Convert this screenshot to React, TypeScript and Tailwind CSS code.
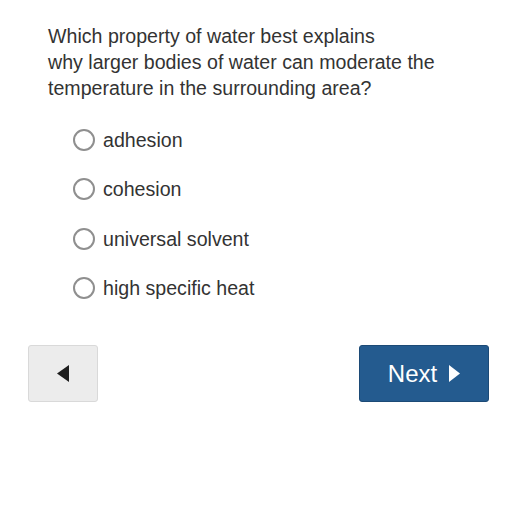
import { useState } from "react";

const options = ["adhesion", "cohesion", "universal solvent", "high specific heat"];

export default function App() {
  const [picked, setPicked] = useState<number | null>(null);

  return (
    <div
      className="w-[518px] h-[519px] bg-white text-[#333333]"
      style={{ fontFamily: '"Liberation Sans", Arial, sans-serif' }}
    >
      <div className="pl-[48px] pr-[20px] pt-[23px]">
        <p className="text-[19.6px] leading-[26px]">
          Which property of water best explains
          <br />
          why larger bodies of water can moderate the
          <br />
          temperature in the surrounding area?
        </p>

        {/* Answer choices */}
        <div className="mt-[14px] ml-[25px] flex flex-col">
          {options.map((opt, i) => (
            <label
              key={opt}
              className="flex items-center h-[49.5px] cursor-pointer"
              onClick={() => setPicked(i)}
            >
              <span className="w-[22px] h-[22px] rounded-full border-2 border-[#8f8f8f] flex items-center justify-center">
                {picked === i && <span className="w-[10px] h-[10px] rounded-full bg-[#245b8f]" />}
              </span>
              <span className="ml-[8px] text-[19.6px] leading-[26px]">{opt}</span>
            </label>
          ))}
        </div>
      </div>

      {/* Nav buttons */}
      <div className="mt-[32px] pl-[28px] pr-[29px] flex justify-between">
        <button className="w-[70px] h-[57px] bg-[#ececec] border border-[#d9d9d9] rounded-[3px] flex items-center justify-center">
          <svg width="12" height="17" viewBox="0 0 12 17">
            <path d="M12 0 L0 8.5 L12 17 Z" fill="#1e1e1e" />
          </svg>
        </button>
        <button className="w-[130px] h-[57px] bg-[#245b8f] border border-[#1c4a76] rounded-[3px] flex items-center justify-center gap-[12px] text-white">
          <span className="text-[24px] leading-none">Next</span>
          <svg width="11" height="17" viewBox="0 0 11 17">
            <path d="M0 0 L11 8.5 L0 17 Z" fill="#ffffff" />
          </svg>
        </button>
      </div>
    </div>
  );
}
